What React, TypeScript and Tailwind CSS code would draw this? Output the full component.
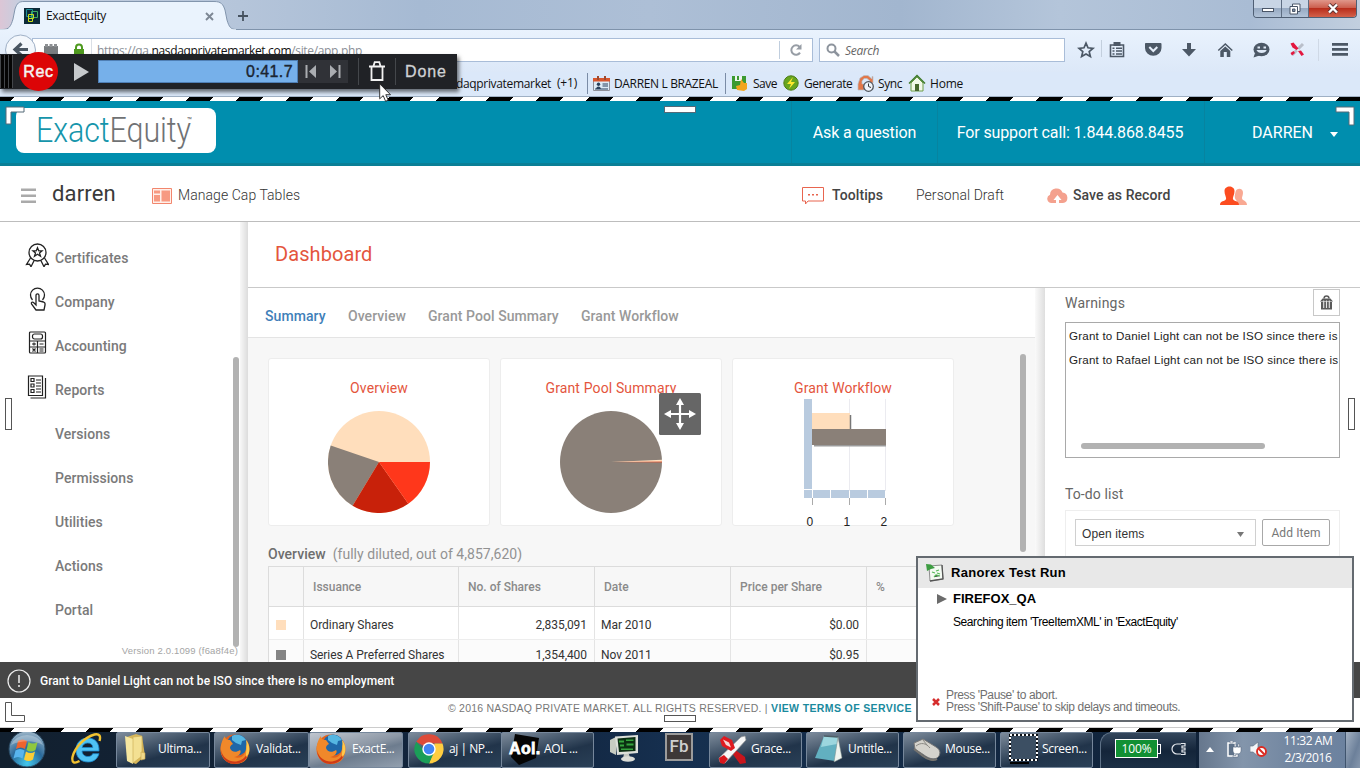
import React from "react";

const SEGOE = "font-['Open_Sans','Noto_Sans',sans-serif]";
const ROBOTO = "font-[Roboto,sans-serif]";
const ARIAL = "font-['Liberation_Sans',Arial,sans-serif]";

function Stripes() {
  return (
    <div className="h-[4px] shrink-0 bg-[repeating-linear-gradient(135deg,#000_0px,#000_9.9px,#fff_9.9px,#fff_27.6px,#000_27.6px,#000_35.355px)]" />
  );
}

/* ---------- Browser chrome ---------- */

function TitleBar() {
  return (
    <div className="relative flex h-[30px] shrink-0 items-start border-b border-[#7f93ab] bg-[linear-gradient(90deg,#dcc6d6_0px,#c5cfe0_20px,#b5c5da_240px,#a6bad3_420px,#adbfd6_650px,#a2b6cf_900px,#b4c5da_1060px,#a9bcd4_1250px,#c2cfdf_1360px)]">
      <svg width="236" height="30" viewBox="0 0 236 30" className="absolute left-0 top-0">
        <path d="M0 29.500H3C9 29.500 11 26 13 19L15 9C17 3 19 1.500 24 1.500H214C221 1.500 223 4 225 10L227 20C229 27 231 29.500 236 29.500V31H0Z" fill="#eaf3fd" stroke="#8295ad" />
        <path d="M0 30H236" stroke="#eaf3fd" strokeWidth="1.400" />
      </svg>
      <div className="relative flex h-[32px] w-[236px] items-center pl-[24px]">
        <svg width="16" height="16" viewBox="0 0 16 16">
          <rect width="16" height="16" fill="#0c2a38" />
          <path d="M2.500 1.500h6v7h-6z" fill="none" stroke="#1e8f9a" />
          <path d="M7.500 3.500h6v6h-6z" fill="none" stroke="#3fae62" />
          <path d="M4.500 6.500h5v4h-5zM4.500 10.500h4v3h-4z" fill="none" stroke="#c9e01a" />
        </svg>
        <span className={`${SEGOE} ml-[6px] w-[150px] text-[12px] tracking-[-0.4px] text-[#111]`}>ExactEquity</span>
        <svg width="9" height="9" viewBox="0 0 9 9" className="ml-[9px]">
          <path d="M1 1l7 7M8 1l-7 7" stroke="#7d8794" strokeWidth="1.900" />
        </svg>
      </div>
      <svg width="12" height="12" viewBox="0 0 12 12" className="ml-[1px] mt-[10px]">
        <path d="M6 1v10M1 6h10" stroke="#46525f" strokeWidth="1.800" />
      </svg>
      <div className="ml-auto mr-[3px] flex h-[18px] overflow-hidden rounded-b-[4px] border border-t-0 border-[#4f5f74]">
        <div className="flex w-[28px] items-center justify-center border-r border-[#5d6d82] bg-[linear-gradient(#c8d5e5_45%,#97aac2_50%,#b2c3d8)] pt-[3px]">
          <div className="h-[4px] w-[12px] border border-[#4a5668] bg-white" />
        </div>
        <div className="flex w-[27px] items-center justify-center border-r border-[#5d6d82] bg-[linear-gradient(#c8d5e5_45%,#97aac2_50%,#b2c3d8)]">
          <svg width="12" height="12" viewBox="0 0 12 12">
            <path d="M3.500 1h7.500v7.500H3.500z" fill="#fff" stroke="#4a5668" />
            <path d="M1 3.500h7.500V11H1z" fill="#fff" stroke="#4a5668" />
            <path d="M3.500 6h2.500v2.500H3.500z" fill="#7d90a8" stroke="#4a5668" />
          </svg>
        </div>
        <div className="flex w-[47px] items-center justify-center bg-[linear-gradient(#e0978a_0%,#cc5f4e_45%,#b92e1c_50%,#d3614a)]">
          <svg width="12" height="11" viewBox="0 0 12 11">
            <path d="M2 1.500l8 8M10 1.500l-8 8" stroke="#5d3434" strokeWidth="4" />
            <path d="M2 1.500l8 8M10 1.500l-8 8" stroke="#fff" strokeWidth="2.400" />
          </svg>
        </div>
      </div>
    </div>
  );
}

function NavBar() {
  return (
    <div className="relative flex h-[42px] shrink-0 items-start bg-[linear-gradient(#e9f2fd,#dce8f8)] pt-[8px]">
      <div className={`${SEGOE} ml-[32px] flex h-[24px] w-[781px] items-center border border-[#a9bdd8] bg-white text-[12px]`}>
        <svg width="16" height="14" viewBox="0 0 16 14" className="ml-[11px]">
          <path d="M0 3h14v11H0z" fill="#7a7d80" />
          <path d="M1 1h3v3H1zM5.500 1h3v3h-3zM10 1h3v3h-3z" fill="#8d9093" />
        </svg>
        <svg width="12" height="14" viewBox="0 0 12 14" className="ml-[13px]">
          <path d="M3 7V4.500a3 3 0 0 1 6 0V7" fill="none" stroke="#4f9a20" strokeWidth="2" />
          <path d="M1 6h10v8H1z" fill="#4f9a20" />
        </svg>
        <div className="ml-[6px] h-[22px] w-px bg-[#dadfe6]" />
        <span className="ml-[5px] mt-[2px] w-[680px] tracking-[-0.33px] text-[#8b9097]">https://qa.<span className="text-[#111]">nasdaqprivatemarket.com</span>/site/app.php</span>
        <div className="ml-auto h-[18px] w-px bg-[#c0cede]" />
        <div className="flex w-[32px] justify-center">
          <svg width="14" height="14" viewBox="0 0 14 14">
            <path d="M11 9.600A4.700 4.700 0 1 1 10.600 4" fill="none" stroke="#979da5" strokeWidth="2" />
            <path d="M12.500 1v5.500H7z" fill="#979da5" />
          </svg>
        </div>
      </div>
      <svg width="64" height="34" viewBox="0 0 64 34" className="absolute left-0 top-[3px]">
        <circle cx="20.500" cy="17" r="15" fill="#f3f7fc" stroke="#9fb0c6" />
        <path d="M28 16.500H16M21.500 10.500l-6.500 6 6.500 6" fill="none" stroke="#4a5662" strokeWidth="3.200" />
      </svg>
      <div className="ml-[6px] flex h-[24px] w-[246px] items-center border border-[#a9bdd8] bg-white pl-[6px]">
        <svg width="14" height="14" viewBox="0 0 14 14">
          <circle cx="5.500" cy="5.500" r="4" fill="none" stroke="#8d949d" strokeWidth="2" />
          <path d="M8.500 8.500L13 13" stroke="#8d949d" strokeWidth="2.500" />
        </svg>
        <span className={`${SEGOE} ml-[5px] mt-[2px] text-[12px] italic tracking-[-0.3px] text-[#666]`}>Search</span>
      </div>
      <div className="ml-[12px] flex h-[24px] items-center">
        <svg width="283" height="24" viewBox="0 0 283 24" fill="#4c5866">
          <path d="M9 5.200l2 4.600 5 .5-3.800 3.300 1.200 4.900L9 15.900l-4.400 2.600 1.200-4.900L2 10.300l5-.5z" fill="none" stroke="#4c5866" strokeWidth="1.700" />
          <path d="M24.500 2v17" stroke="#c3cfdd" />
          <path d="M33.500 7h13v11.500H33.500z" fill="none" stroke="#4c5866" strokeWidth="1.600" />
          <path d="M36.500 4h7v4h-7zM35.500 9.500h2v1.500h-2zM39 9.500h6V11h-6zM35.500 12.300h2v1.500h-2zM39 12.300h6v1.500h-6zM35.500 15.200h2v1.500h-2zM39 15.200h6v1.500h-6z" />
          <path d="M68.500 5H83.500a1 1 0 0 1 1 1v4a8 7.500 0 0 1-16.500 0V6a1 1 0 0 1 .5-1z" />
          <path d="M72.300 9l4 4 4-4" fill="none" stroke="#e5eefa" strokeWidth="2" />
          <path d="M110 5h4v6h5l-7 7.500L105 11h5z" />
          <path d="M148.300 5l7.500 7-1 1-6.500-6-6.500 6-1-1z" />
          <path d="M148.300 8.500l5 4.500v6h-3.500v-5h-3v5h-3.500v-6z" />
          <ellipse cx="184.500" cy="11.500" rx="8" ry="6.700" />
          <path d="M178 15l-1.500 4.500 6-2z" />
          <path d="M180.500 8.500h2.500v2h-2.500zM186.500 8.500h2.500v2h-2.500zM179.500 12h10.200c-1 4-9 4-10.200 0z" fill="#dfe9f6" />
          <path d="M226 6l-11 11" stroke="#b9bfca" strokeWidth="3" />
          <path d="M215 6l11 11" stroke="#e8eef6" strokeWidth="2" />
          <path d="M213.500 5.500l3-1 5 6-2 1.500-4-2.500zM221 13l3-.5 3 4-2.500 1.500zM213.500 15l3-2 1.500 2-3 2.500z" fill="#e3173f" />
          <path d="M241.500 1v22" stroke="#cfd9e6" />
          <path d="M255 5h16v2.800h-16zM255 10h16v2.800h-16zM255 15h16v2.800h-16z" />
        </svg>
      </div>
    </div>
  );
}

function Bookmarks() {
  return (
    <div className={`${SEGOE} flex h-[25px] shrink-0 items-center border-b border-[#9fb0c4] bg-[#dbe8f9] text-[12px] text-[#111]`}>
      <div className="w-[551px] text-right tracking-[-0.33px]">nasdaqprivatemarket</div>
      <span className="-mt-[3px] ml-[6px] w-[30px] tracking-[-0.2px]">(+1)</span>
      <div className="-mt-[2px] h-[21px] w-px bg-[#7b8ca6]" />
      <svg width="17" height="15" viewBox="0 0 17 15" className="-mt-[2px] ml-[5px]">
        <path d="M.5 2.500h16v12H.5z" fill="#dcebf6" stroke="#8d8f99" />
        <path d="M0 2h17v3.500H0z" fill="#d8552c" />
        <path d="M4 0h2v4H4zM11 0h2v4h-2z" fill="#9b4a30" />
        <circle cx="5.500" cy="8.300" r="1.700" fill="#29405c" />
        <path d="M3 13.500c0-4 5-4 5 0zM9.500 7.500H15v1H9.500zM9.500 9.500H15v1H9.500zM2 12.500h13v1H2z" fill="#29405c" />
      </svg>
      <span className="ml-[4px] w-[113px] whitespace-nowrap text-[12px] tracking-[-0.35px]">DARREN L BRAZEAL</span>
      <div className="-ml-[2px] -mt-[2px] h-[21px] w-px bg-[#7b8ca6]" />
      <svg width="16" height="16" viewBox="0 0 16 16" className="-mt-[2px] ml-[6px]">
        <path d="M0 1h14v13H0z" fill="#3c9a31" />
        <path d="M3 1h7v5H3z" fill="#eef6ee" />
        <path d="M5 1h2v4H5z" fill="#3c9a31" />
        <path d="M9 4l3 4h3v6l-3 2-7-1-1-4 4-1z" fill="#f3a51d" />
      </svg>
      <span className="ml-[5px] w-[25px] tracking-[-0.5px]">Save</span>
      <svg width="16" height="16" viewBox="0 0 16 16" className="-mt-[2px] ml-[5px]">
        <circle cx="8" cy="8" r="7.200" fill="#67a51f" stroke="#4c7d16" />
        <path d="M10 2L4 9h4l-2 5 6-7H8z" fill="#ffe92e" />
      </svg>
      <span className="ml-[5px] w-[48px] tracking-[-0.5px]">Generate</span>
      <svg width="18" height="17" viewBox="0 0 18 17" className="-mt-[2px] ml-[5px]">
        <path d="M1 15V9l2-6 4-2.500h4L15 4V1.500h1V8h-5l2-2-3-2.500H7L5 6v3h2v6z" fill="#e27749" stroke="#b9bec5" strokeWidth=".7" />
        <circle cx="11.500" cy="11.500" r="4.800" fill="#eef3fa" stroke="#50555d" strokeWidth="1.300" />
        <path d="M11.500 8.500v3l2.500 1" fill="none" stroke="#333" />
      </svg>
      <span className="ml-[3px] w-[26px] tracking-[-0.4px]">Sync</span>
      <svg width="18" height="18" viewBox="0 0 18 18" className="-mt-[2px] ml-[4px]">
        <path d="M3 9v8h12V9L9 3z" fill="#f1f8e9" stroke="#6d9d48" />
        <path d="M1 9.500L9 1.500l8 8" fill="none" stroke="#3d7a28" strokeWidth="1.500" />
        <path d="M7 10h4v7H7z" fill="#47672e" />
      </svg>
      <span className="ml-[4px] tracking-[-0.2px]">Home</span>
    </div>
  );
}

/* ---------- Application ---------- */

function AppHeader() {
  return (
    <div className={`${ROBOTO} flex h-[65px] shrink-0 items-stretch border-b-[3px] border-[#097f96] bg-[#008eae] text-[16px] tracking-[-0.13px] text-white`}>
      <div className="ml-[16px] mt-[7px] flex h-[45px] w-[200px] items-center rounded-[8px] bg-white pl-[20px]">
        <span className="w-[151px] whitespace-nowrap text-[35px] font-light leading-[44px] tracking-[-0.1px] text-[#707274]">
          <span className="inline-block origin-left scale-x-[0.87]"><span className="text-[#1595ab]">Exact</span>Equity</span>
        </span>
        <span className="-mt-[20px] text-[8px] leading-[10px] text-[#555]">™</span>
      </div>
      <div className="ml-auto flex w-[146px] items-center justify-center border-l border-[#0784a0] pt-[1px]">Ask a question</div>
      <div className="flex w-[267px] items-center justify-center border-l border-[#0784a0] pr-[2px] pt-[1px]">For support call: 1.844.868.8455</div>
      <div className="flex w-[156px] items-center border-l border-[#0784a0] pl-[47px] pt-[2px]">
        <span className="w-[78px] tracking-normal">DARREN</span>
        <svg width="8" height="5" viewBox="0 0 8 5" className="mt-[3px]"><path d="M0 0h8L4 5z" fill="#fff" /></svg>
      </div>
    </div>
  );
}

function SubHeader() {
  return (
    <div className={`${ROBOTO} flex h-[56px] shrink-0 items-center border-b border-[#bdbdbd] bg-white pt-[4px] text-[14px] text-[#444]`}>
      <svg width="15" height="16" viewBox="0 0 15 16" className="ml-[21px]">
        <path d="M0 .5h15V3H0zM0 6.500h15V9H0zM0 12.500h15V15H0z" fill="#aaa" />
      </svg>
      <span className="-mt-[5px] ml-[16px] w-[100px] text-[22px] tracking-[0.15px] text-[#3a3a3a]">darren</span>
      <svg width="20" height="16" viewBox="0 0 20 16">
        <path d="M.5.500h19v15H.5z" fill="#fff0ea" stroke="#f2866d" />
        <path d="M2 2.500h6v3H2zM2 7h6v6.500H2zM9.500 2.500h8.500v11H9.500z" fill="#f79a82" />
      </svg>
      <span className="-mt-[1px] ml-[6px] w-[624px] font-light tracking-[0.06px] text-[#333]">Manage Cap Tables</span>
      <svg width="22" height="18" viewBox="0 0 22 18">
        <path d="M.5.500h21v13.500H6l-2.500 3V14h-3z" fill="none" stroke="#e8654f" />
        <path d="M6 7h2v1.500H6zM10 7h2v1.500h-2zM14 7h2v1.500h-2z" fill="#e8654f" />
      </svg>
      <span className="ml-[8px] w-[84px] font-medium tracking-[0.1px]">Tooltips</span>
      <span className="w-[131px] font-light tracking-[0.05px] text-[#333]">Personal Draft</span>
      <svg width="21" height="15" viewBox="0 0 21 15">
        <path d="M4.500 15A4.300 4.300 0 0 1 3 6.700 6.500 6.500 0 0 1 15.500 4.500 5.300 5.300 0 0 1 16 15h-4v-3h2.500L10.500 7l-4 5H9v3z" fill="#f4a18e" />
      </svg>
      <span className="ml-[5px] w-[147px] font-medium tracking-[0.08px]">Save as Record</span>
      <svg width="28" height="20" viewBox="0 0 28 20">
        <path d="M14 19c5-1 3-4 2-5-2-3-1-5-.5-8 1-5 8-4 7.500 1-.3 3-1 4-1 5 0 3 5 2 5 7z" fill="#f9a993" />
        <path d="M0 19c0-5 5-3 6-6 .5-2-1.500-4-1.500-8 0-6 10-6 10 0 0 4-2 6-1.500 8 1 3 6 1 6 6z" fill="#fc4c20" />
      </svg>
    </div>
  );
}

const navIcons: Record<string, React.ReactNode> = {
  Certificates: (
    <g fill="none" stroke="#222" strokeWidth="1.300">
      <circle cx="12.500" cy="9.500" r="8.500" />
      <path d="M12.500 4.800l1.300 3.100h3.200l-2.500 2.100 1 3.200-3-1.900-3 1.900 1-3.200-2.500-2.100h3.200z" />
      <path d="M5.500 15L1.500 21.500l3-.3 1.500 2.500 3-6M19.500 15l4 6.500-3-.3-1.500 2.500-3-6" />
    </g>
  ),
  Company: (
    <g fill="none" stroke="#222" strokeWidth="1.300">
      <path d="M7.500 13a7 7 0 1 1 10 0" />
      <path d="M11 15V8.500c0-2.300 3-2.300 3 0V14l4.500 1c1.500.5 1.800 1.500 1.500 3l-1 5h-8L6.500 17c-.7-1.500 1-2.500 2-1.500l2.500 2.500z" />
    </g>
  ),
  Accounting: (
    <g fill="none" stroke="#222" strokeWidth="1.200">
      <rect x="4.500" y="1" width="16" height="21" rx="1" />
      <rect x="7.500" y="3" width="10" height="5" rx="2" />
      <path d="M4.500 10h16M4.500 16h16M12.500 10v12M7 13h4M9 11.500v3M14.500 13h4M7.500 17.500l3 3M10.500 17.500l-3 3M14.500 18h4M14.500 20h4" />
    </g>
  ),
  Reports: (
    <g fill="none" stroke="#222" strokeWidth="1.200">
      <path d="M3.500 1h14v19.500h-14zM20.500 3v20H5.500" />
      <path d="M6 3.500h3v3H6zM6 9h3v3H6zM6 14.500h3v3H6zM11 5h5M11 8h5M11 11h5M11 14h5M11 17h5" />
    </g>
  ),
};

const navItems = ["Certificates", "Company", "Accounting", "Reports", "Versions", "Permissions", "Utilities", "Actions", "Portal"];

function Sidebar() {
  return (
    <div className="flex w-[248px] shrink-0 bg-white">
      <div className="flex w-[233px] flex-col pt-[14px]">
        {navItems.map((n) => (
          <div key={n} className={`${ROBOTO} flex h-[44px] shrink-0 items-center pl-[25px] text-[14px] font-medium tracking-[0.04px] text-[#7a7a7a]`}>
            <svg width="24" height="24" viewBox="0 0 24 24" className="-mt-[6px]">{navIcons[n]}</svg>
            <span className="ml-[6px]">{n}</span>
          </div>
        ))}
        <div className={`${ARIAL} mt-[12px] self-end whitespace-nowrap text-[9.500px] leading-[14px] tracking-[0.16px] text-[#a5a5a5]`}>
          <span className="-mr-[5px]">Version 2.0.1099 (f6a8f4e)</span>
        </div>
      </div>
      <div className="mt-[135px] h-[290px] w-[6px] rounded-full bg-[#b2b2b2]" />
      <div className="ml-auto w-[8px] bg-[linear-gradient(90deg,#f8f8f8,#dcdcdc)]" />
    </div>
  );
}

function Card({ title, children }: { title: string; children: React.ReactNode }) {
  return (
    <div className="flex h-[168px] w-[222px] flex-col items-center rounded-[3px] border border-[#ededed] bg-white">
      <div className={`${ROBOTO} mt-[19px] h-[20px] shrink-0 text-[14px] leading-[20px] tracking-[0.13px] text-[#e4553d]`}>{title}</div>
      {children}
    </div>
  );
}

function OverviewPie() {
  return (
    <svg width="102" height="102" viewBox="0 0 102 102" className="mt-[13px] shrink-0">
      <circle cx="51" cy="51" r="51" fill="#ffdebc" />
      <path d="M51 51L2.700 34.600A51 51 0 0 0 24.600 94.700z" fill="#8a8078" />
      <path d="M51 51L24.600 94.700A51 51 0 0 0 80.300 92.700z" fill="#c8210a" />
      <path d="M51 51L80.300 92.700A51 51 0 0 0 102 51z" fill="#ff371b" />
    </svg>
  );
}

function PoolPie() {
  return (
    <svg width="102" height="102" viewBox="0 0 102 102" className="mt-[13px] shrink-0">
      <circle cx="51" cy="51" r="51" fill="#8a8078" />
      <path d="M51 51L102 48.700V51z" fill="#ffdebc" />
      <path d="M51 51L102 50.400V51.600z" fill="#d85a3e" />
    </svg>
  );
}

function WorkflowChart() {
  return (
    <svg width="92" height="132" viewBox="0 0 92 132" className="mt-px shrink-0 overflow-visible" fontFamily="Liberation Sans, Arial, sans-serif" fontSize="12">
      <path d="M52.500 0V92M88.500 0V92" stroke="#ebebf0" />
      <path d="M7 0h8v90H7z" fill="#b9cbdf" />
      <path d="M15 14h38v17H15z" fill="#ffdebc" />
      <path d="M17 45h72v2.500H17z" fill="#9b9b9b" />
      <path d="M15 30h74v16H15z" fill="#8a8078" />
      <path d="M53.500 16v14" stroke="#777" strokeWidth="1.500" />
      <path d="M7 91h8v8H7zM16 91h17v8H16zM34 91h18v8H34zM53 91h17v8H53zM71 91h17v8H71z" fill="#b9cbdf" />
      <path d="M15.500 99v7M52.500 99v7M88.500 99v7" stroke="#aaa" />
      <text x="9.500" y="127" fill="#222">0</text>
      <text x="46.500" y="127" fill="#222">1</text>
      <text x="83.500" y="127" fill="#222">2</text>
    </svg>
  );
}

const rows = [
  { color: "bg-[#ffdebc]", name: "Ordinary Shares", shares: "2,835,091", date: "Mar 2010", price: "$0.00" },
  { color: "bg-[#848484]", name: "Series A Preferred Shares", shares: "1,354,400", date: "Nov 2011", price: "$0.95" },
];

function ShareTable() {
  return (
    <div className={`${ROBOTO} ml-[20px] w-[752px] border-l border-t border-[#dcdcdc] text-[12px]`}>
      <div className="flex h-[40px] items-stretch border-b border-[#dcdcdc] font-medium text-[#8a8a8a] [&>div]:flex [&>div]:items-center [&>div]:border-r [&>div]:border-[#dcdcdc] [&>div]:pl-[9px]">
        <div className="w-[35px]" />
        <div className="w-[155px]">Issuance</div>
        <div className="w-[136px]">No. of Shares</div>
        <div className="w-[136px]">Date</div>
        <div className="w-[136px]">Price per Share</div>
        <div className="w-[153px]">%</div>
      </div>
      {rows.map((r, i) => (
        <div key={r.name} className={`flex items-stretch border-b border-[#ededed] tracking-[-0.06px] text-[#333] [&>div]:flex [&>div]:items-center [&>div]:border-r [&>div]:border-[#e4e4e4] ${i === 0 ? "h-[33px] bg-white [&>div]:pt-[3px]" : "h-[30px] bg-[#fbfbfb]"}`}>
          <div className="w-[35px] pl-[7px]"><div className={`h-[10px] w-[10px] ${r.color}`} /></div>
          <div className="w-[155px] pl-[6px]">{r.name}</div>
          <div className="w-[136px] justify-end pr-[7px]">{r.shares}</div>
          <div className="w-[136px] pl-[6px]">{r.date}</div>
          <div className="w-[136px] justify-end pr-[7px]">{r.price}</div>
          <div className="w-[153px]" />
        </div>
      ))}
    </div>
  );
}

function Center() {
  return (
    <div className="flex w-[797px] shrink-0">
      <div className="flex w-[787px] flex-col bg-[#f7f7f7]">
        <div className={`${ROBOTO} flex h-[50px] shrink-0 items-center border-b border-[#e4e4e4] bg-white pl-[17px] pt-[8px] text-[14px] font-medium tracking-[0.06px] text-[#999]`}>
          <span className="w-[83px] text-[#3f7fb9]">Summary</span>
          <span className="w-[80px]">Overview</span>
          <span className="w-[153px]">Grant Pool Summary</span>
          <span>Grant Workflow</span>
        </div>
        <div className="flex shrink-0">
          <div className="flex w-[706px] gap-[10px] pl-[20px] pt-[20px]">
            <Card title="Overview"><OverviewPie /></Card>
            <Card title="Grant Pool Summary"><PoolPie /></Card>
            <Card title="Grant Workflow"><WorkflowChart /></Card>
          </div>
          <div className="-mb-[26px] ml-[66px] mt-[16px] h-[198px] w-[6px] rounded-full bg-[#b2b2b2]" />
        </div>
        <div className={`${ROBOTO} ml-[20px] mt-[18px] h-[22px] shrink-0 text-[14px] leading-[20px] tracking-[0.03px] text-[#929292]`}>
          <span className="font-medium text-[#6e6e6e]">Overview</span><span className="ml-[7px]">(fully diluted, out of 4,857,620)</span>
        </div>
        <ShareTable />
      </div>
      <div className="w-[10px] bg-[linear-gradient(90deg,#fafafa,#dedede)]" />
    </div>
  );
}

function RightPanel() {
  return (
    <div className="w-[315px] bg-white pl-[20px] text-[#666]">
      <div className="flex h-[34px] items-start justify-between">
        <span className={`${ROBOTO} mt-[5px] text-[14px] leading-[20px] tracking-[0.2px]`}>Warnings</span>
        <div className="mr-[20px] mt-[1px] flex h-[27px] w-[27px] items-center justify-center border border-[#c8c8c8]">
          <svg width="13" height="15" viewBox="0 0 13 15">
            <path d="M4 3.500c0-3.500 5-3.500 5 0" fill="none" stroke="#5a5a5a" strokeWidth="1.500" />
            <path d="M0 6.500L2.500 3.500h8L13 6.500zM1 7h11v7.500H1z" fill="#5a5a5a" />
            <path d="M3.700 5.500V13M6.500 5.500V13M9.300 5.500V13" stroke="#e5e5e5" strokeWidth="1.100" />
          </svg>
        </div>
      </div>
      <div className={`${ARIAL} flex h-[136px] w-[275px] flex-col overflow-hidden border border-[#a9a9a9] pl-[3px] pt-[1px] text-[11.600px] leading-[24px] tracking-[0.2px] text-[#222]`}>
        <div className="h-[24px] whitespace-nowrap">Grant to Daniel Light can not be ISO since there is</div>
        <div className="h-[24px] whitespace-nowrap">Grant to Rafael Light can not be ISO since there is</div>
        <div className="ml-[12px] mt-[71px] h-[6px] w-[184px] rounded-full bg-[#b2b2b2]" />
      </div>
      <div className={`${ROBOTO} mt-[26px] text-[14px] leading-[20px] tracking-[0.1px]`}>To-do list</div>
      <div className="mt-[6px] flex h-[200px] w-[275px] items-start gap-[6px] border border-[#eee] pl-[9px] pt-[8px]">
        <div className={`${ARIAL} flex h-[27px] w-[181px] items-center justify-between border border-[#d0d0d0] pl-[6px] pr-[11px] text-[12px] tracking-[0.1px] text-[#333]`}>
          <span className="mt-[2px]">Open items</span>
          <svg width="7" height="5" viewBox="0 0 7 5" className="mt-[3px]"><path d="M0 0h7L3.500 5z" fill="#777" /></svg>
        </div>
        <div className={`${ROBOTO} flex h-[27px] w-[68px] items-center justify-center rounded-[2px] border border-[#a8a8a8] text-[12px] tracking-[0.1px] text-[#777]`}>Add Item</div>
      </div>
    </div>
  );
}

function Bottom() {
  return (
    <>
      <div className={`${ROBOTO} flex h-[36px] shrink-0 items-center bg-[#464646] pl-[7px] pt-[1px] text-[12px] font-medium tracking-[0.05px] text-white`}>
        <svg width="24" height="24" viewBox="0 0 24 24">
          <circle cx="12" cy="12" r="11" fill="none" stroke="#eee" strokeWidth="1.200" />
          <path d="M12 6v8M12 16v2" stroke="#eee" strokeWidth="1.500" />
        </svg>
        <span className="ml-[9px]">Grant to Daniel Light can not be ISO since there is no employment</span>
      </div>
      <div className={`${ARIAL} flex h-[30px] shrink-0 items-start border-b border-[#ccc] bg-white pl-[448px] pt-[3px] text-[10.500px] leading-[14px] text-[#777]`}>
        <span className="w-[323px] whitespace-nowrap tracking-[0.22px]">© 2016 NASDAQ PRIVATE MARKET. ALL RIGHTS RESERVED. |</span>
        <span className="whitespace-nowrap font-bold tracking-[0.38px] text-[#1a8a9e]">VIEW TERMS OF SERVICE</span>
      </div>
    </>
  );
}

/* ---------- Taskbar ---------- */

function Firefox() {
  return (
    <svg width="32" height="32" viewBox="0 0 32 32" className="shrink-0">
      <circle cx="16" cy="16" r="14.500" fill="#e4621b" />
      <circle cx="18" cy="12" r="10.500" fill="#1f67a8" />
      <path d="M13 3c4-2.500 11-1 14 4l-4 1-1 4-5-2-4-3z" fill="#55b6e2" />
      <path d="M2 12C3 7 5 4 6 3c0 3 2 4 5 4l3 4c-2 1-3 2-3 4 1 4 6 5 10 2 2 2-1 7-6 7 8 3 13-3 12-13 6 11 0 20-11 20C6 31 0 23 2 12z" fill="#f0882a" />
      <path d="M2 17c2 9 10 13 17 11 5-1 9-5 10-10 1 7-5 13-14 13C8 31 2 25 2 17z" fill="#cf3b16" />
      <path d="M27 7c4.500 5 4.500 13 .5 17-1.500-3 1-8-.5-17z" fill="#ffc94b" />
    </svg>
  );
}

function FolderIcon() {
  return (
    <svg width="30" height="32" viewBox="0 0 30 32" className="shrink-0">
      <path d="M5 4l9-3 6 2 3 20-9 8-6-2z" fill="#d7b75a" />
      <path d="M3 3l8 3v25l-6-3z" fill="#f6e7a0" />
      <path d="M11 4l9-1v20l-9 7z" fill="#f3e092" stroke="#c9a94f" strokeWidth=".6" />
      <path d="M19 19l4 1v6l-4 1z" fill="#f0d98a" stroke="#c9a94f" strokeWidth=".6" />
    </svg>
  );
}

function ChromeIcon() {
  return (
    <svg width="30" height="30" viewBox="0 0 30 30" className="shrink-0">
      <path d="M15 15L2.300 7.700A14.500 14.500 0 0 1 28.500 9.500H15z" fill="#dd4b39" />
      <path d="M28.500 9.500A14.500 14.500 0 0 1 15 29.500L19.500 17l1-7.500z" fill="#ffcd40" />
      <path d="M2.300 7.700A14.500 14.500 0 0 0 15 29.500L20 18.500h-8z" fill="#1b9e58" />
      <circle cx="15" cy="15" r="6.700" fill="#fff" />
      <circle cx="15" cy="15" r="5.300" fill="#4285f4" />
    </svg>
  );
}

function AolIcon() {
  return (
    <svg width="32" height="32" viewBox="0 0 32 32" className="shrink-0 overflow-visible">
      <path d="M6 1l24 4-3 20-17 7-8-8z" fill="#050505" />
      <text x="0" y="21" fontFamily="Liberation Sans, sans-serif" fontWeight="700" fontSize="16" fill="#fff" stroke="#fff" strokeWidth=".8" textLength="31">Aol.</text>
    </svg>
  );
}

function SnipIcon() {
  return (
    <svg width="33" height="33" viewBox="0 0 33 33" className="shrink-0">
      <path d="M10 12l7 4 11 8 1 6-6 1-8-11z" fill="#c9151c" />
      <path d="M3 29l-1-4L24 4l4-1 1 4L8 30z" fill="#f7f7f7" stroke="#999" strokeWidth=".7" />
      <path d="M3 7l4-4 8 4 3 8-4 3-9-5z" fill="#df1a20" />
      <path d="M6 6.500l6 3 2 5-5-2.500z" fill="#f6d6d6" />
      <path d="M2 25l5-3 4 4-4 5-4-1z" fill="#d8161c" />
    </svg>
  );
}

function NotepadIcon() {
  return (
    <svg width="32" height="32" viewBox="0 0 32 32" className="shrink-0">
      <path d="M10 3l14 1-3 24L1 25z" fill="#62b0c0" />
      <path d="M10 3l14 1-1 7-16 3z" fill="#9cd6de" />
      <path d="M10 3l14 1" stroke="#4d5e66" strokeWidth="1.500" />
      <path d="M24 4l4 21-8 4z" fill="#eff4ef" stroke="#7a8a86" strokeWidth=".5" />
    </svg>
  );
}

function MouseIcon() {
  return (
    <svg width="34" height="30" viewBox="0 0 34 30" className="shrink-0">
      <path d="M4 9l9-4 13 8c5 3 5 8 1 11-4 2-9 0-13-3L5 15z" fill="#d5d3cd" stroke="#777" />
      <path d="M6 12c5-4 10-3 14 2M13 6l4 5" fill="none" stroke="#8b8984" />
      <path d="M4 15l9 7c5 4 11 5 14 3" fill="none" stroke="#75736f" strokeWidth="2" />
    </svg>
  );
}

function MarqueeIcon() {
  return (
    <svg width="31" height="34" viewBox="0 0 31 34" className="shrink-0">
      <path d="M2 3h27v25H2z" fill="#3c4f63" stroke="#0b0f14" strokeWidth="2" />
      <path d="M2 3h27v25H2z" fill="none" stroke="#fff" strokeWidth="2" strokeDasharray="2 2" />
      <path d="M2 30h19v2H2z" fill="#000" />
    </svg>
  );
}

const taskBtn =
  "flex h-[36px] shrink-0 items-center overflow-hidden whitespace-nowrap rounded-[2px] border border-[#76879b] pb-[2px] text-[12px] tracking-[-0.3px] text-white";
const dark = "bg-[linear-gradient(165deg,#7d8b9b_0%,#46586c_35%,#21344a_60%,#2a4057_100%)]";
const lit = "bg-[linear-gradient(165deg,#c0c6cf_0%,#8d98a6_45%,#6d7c8e_60%,#93a0af_100%)]";

function Taskbar() {
  return (
    <div className={`${SEGOE} flex h-[37px] shrink-0 items-start bg-[linear-gradient(90deg,#12202f,#122640_40%,#163050_50%,#102238_90%)]`}>
      <div className="flex w-[116px] items-center">
        <svg width="38" height="36" viewBox="0 0 38 36" className="ml-[8px]">
          <defs>
            <radialGradient id="orb" cx=".5" cy=".9" r=".9">
              <stop offset="0" stopColor="#43c9ee" />
              <stop offset=".5" stopColor="#2a6a9b" />
              <stop offset="1" stopColor="#9fb7c9" />
            </radialGradient>
          </defs>
          <circle cx="19" cy="17" r="18" fill="url(#orb)" stroke="#27465f" />
          <path d="M10 9c3-2 6-2 9 0l-2 8c-3-2-6-2-9 0z" fill="#f0642d" />
          <path d="M20.500 10c3 2 6 2 9 0l-2 8c-3 2-6 2-9 0z" fill="#8fc840" />
          <path d="M7.500 18.500c3-2 6-2 9 0l-2 8c-3-2-6-2-9 0z" fill="#58b5ee" />
          <path d="M18 19.500c3 2 6 2 9 0l-2 8c-3 2-6 2-9 0z" fill="#fbcd36" />
          <path d="M3 13a17 15 0 0 1 32 0c-9-5-22-5-32 0z" fill="#fff" opacity=".28" />
        </svg>
        <svg width="32" height="34" viewBox="0 0 32 34" className="ml-[25px]">
          <path d="M28 18H11c.5 4 3 5.500 6 5.500 2.500 0 4-1 4.700-2.800H28C26.700 25.500 23 29 17 29 10 29 5 24.500 5 17S10 5 17 5c7 0 11.500 5 11 13zM21.800 14.500c-.3-3-2-4.500-5-4.500s-5 1.500-5.700 4.500z" fill="#4fc3f4" stroke="#1a86cb" strokeWidth=".8" />
          <path d="M28.500 8c1.500-5 0-7.500-5-6.500C14 4 4 14 1.500 24c-1 6 2 7 7 4" fill="none" stroke="#f2c230" strokeWidth="2.400" />
        </svg>
      </div>
      <div className={`${taskBtn} ${dark} w-[94px] pl-[5px]`}><FolderIcon /><span className="ml-[6px]">Ultima...</span></div>
      <div className={`${taskBtn} ${dark} ml-[4px] w-[95px] pl-[4px]`}><Firefox /><span className="ml-[5px]">Validat...</span></div>
      <div className={`${taskBtn} ${lit} w-[94px] pl-[5px]`}><Firefox /><span className="ml-[5px] tracking-[-0.4px]">ExactE...</span></div>
      <div className={`${taskBtn} ${dark} ml-[5px] w-[94px] pl-[5px]`}><ChromeIcon /><span className="ml-[5px] tracking-[-0.45px]">aj | NP...</span></div>
      <div className={`${taskBtn} ${dark} -ml-px w-[93px] pl-[7px]`}><AolIcon /><span className="ml-[3px]">AOL ...</span></div>
      <svg width="34" height="34" viewBox="0 0 34 34" className="ml-[14px]">
        <path d="M2 8l6-3v18l-6-3z" fill="#c7ccc2" />
        <path d="M7 4.500l23-1.500v18L9 23z" fill="#dcdfd9" />
        <path d="M9.500 6.500l18-1.500v14l-16.500 1z" fill="#0b2f12" />
        <path d="M11 8.500h5v2h-5zM18 7.500h7.500V9H18zM12 12.500h4v2h-4zM18.500 11.500h7v2h-7zM13 16.500h12V18H13z" fill="#35a33d" />
        <path d="M16 22h5l1 4h-7z" fill="#c3c7c0" />
        <ellipse cx="20" cy="27" rx="7" ry="2.800" fill="#dadcd6" />
      </svg>
      <div className={`${ROBOTO} ml-[23px] mt-[1px] flex h-[28px] w-[28px] items-center justify-center border-2 border-[#9b9b9b] bg-[#3d3838] text-[17px] font-medium text-[#cfcfcf]`}>Fb</div>
      <div className={`${taskBtn} ${dark} ml-[16px] w-[93px] pl-[7px]`}><SnipIcon /><span className="ml-[1px]">Grace...</span></div>
      <div className={`${taskBtn} ${dark} ml-[4px] w-[93px] pl-[7px]`}><NotepadIcon /><span className="ml-[2px]">Untitle...</span></div>
      <div className={`${taskBtn} ${dark} ml-[4px] w-[93px] pl-[6px]`}><MouseIcon /><span className="ml-px">Mouse...</span></div>
      <div className={`${taskBtn} ${dark} ml-[4px] w-[93px] pl-[7px]`}><MarqueeIcon /><span className="ml-[3px]">Screen...</span></div>
      <div className="ml-[7px] flex h-[37px] w-[96px] items-center rounded-tl-[12px] border-l border-t border-[#5f7287] bg-[linear-gradient(#33465c,#14253a_50%,#1d3046)] pb-[5px] pl-[14px]">
        <div className="flex h-[19px] w-[43px] items-center justify-center border border-white bg-[#119033] text-[12px] tracking-[-0.1px] text-white">100%</div>
        <div className="h-[10px] w-[3px] border border-l-0 border-white" />
        <svg width="18" height="14" viewBox="0 0 18 14" className="ml-[9px]">
          <path d="M11 2H7a5 5 0 0 0 0 10h4M11 1.500h4v2.500h-3v2h3v2h-3v2h3v2.500h-4" fill="none" stroke="#e6e9ee" strokeWidth="1.200" />
        </svg>
      </div>
      <div className="ml-[3px] flex h-[37px] w-[146px] items-center bg-[linear-gradient(90deg,#66778d,#8395ab_30%,#7488a2_60%,#6c829f)] pb-[3px] text-white">
        <svg width="8" height="5" viewBox="0 0 8 5" className="ml-[7px]"><path d="M0 5L4 0l4 5z" fill="#fff" /></svg>
        <svg width="15" height="17" viewBox="0 0 15 17" className="ml-[13px]">
          <path d="M1 2h7v13H1z" fill="#5f7289" stroke="#fff" strokeWidth="1.500" />
          <path d="M3 0h3v2H3zM6 6h8v4c0 2-2 3-4 3s-4-1-4-3zM7.500 3h1.500v3H7.500zM11 3h1.500v3H11zM9 13h2v3H6v-1.500h3z" fill="#fff" stroke="#51637a" strokeWidth=".5" />
        </svg>
        <svg width="17" height="16" viewBox="0 0 17 16" className="ml-[8px]">
          <path d="M0 5h3l5-4v14l-5-4H0z" fill="#f3f5f8" stroke="#5d6b7d" strokeWidth=".6" />
          <circle cx="11.500" cy="10.500" r="4.500" fill="#fff" stroke="#dc2b22" strokeWidth="1.900" />
          <path d="M8.500 7.500l6 6" stroke="#dc2b22" strokeWidth="1.900" />
        </svg>
        <div className="ml-[13px] w-[56px] whitespace-nowrap text-center text-[12px] leading-[17px] tracking-[-0.4px]">
          <div>11:32 AM</div>
          <div>2/3/2016</div>
        </div>
      </div>
      <div className="h-[37px] flex-1 border-l border-[#3f546d] bg-[linear-gradient(110deg,#a3b1c2,#6c809a_60%,#8798ae)]" />
    </div>
  );
}

/* ---------- Floating layers ---------- */

function Recorder() {
  return (
    <div className={`${ARIAL} absolute left-0 top-[54px] flex h-[35px] w-[457px] items-center bg-[#202226] shadow-[2px_3px_4px_rgba(0,0,0,0.55)]`}>
      <div className="h-[33px] w-[13px] bg-[repeating-linear-gradient(90deg,#43464a_0px,#43464a_1px,#050505_1px,#050505_4px)]" />
      <div className="ml-[6px] flex h-[39px] w-[39px] shrink-0 items-center justify-center rounded-full bg-[#dc0507] text-[16px] tracking-[0.6px] text-[#f4f4f4] [-webkit-text-stroke:0.5px_#f4f4f4]">Rec</div>
      <svg width="16" height="18" viewBox="0 0 16 18" className="ml-[16px]"><path d="M0 0l15 9-15 9z" fill="#c6c9cc" /></svg>
      <div className="ml-[8px] flex h-[23px] w-[200px] items-center justify-end border border-[#4f7fb5] bg-[#76b0ea] pr-[4px] pt-[1px] text-[16px] tracking-[0.4px] text-[#1b2530] [-webkit-text-stroke:0.4px_#1b2530]">0:41.7</div>
      <div className="flex h-[23px] w-[50px] items-center justify-center gap-[12px] bg-[#303237]">
        <svg width="12" height="13" viewBox="0 0 12 13"><path d="M1.500 0v13" stroke="#aaadb1" strokeWidth="2" /><path d="M11 0v13L4 6.500z" fill="#aaadb1" /></svg>
        <svg width="12" height="13" viewBox="0 0 12 13"><path d="M10.500 0v13" stroke="#aaadb1" strokeWidth="2" /><path d="M1 0v13l7-6.500z" fill="#aaadb1" /></svg>
      </div>
      <div className="ml-[10px] h-[27px] w-px bg-[#44474b]" />
      <svg width="16" height="20" viewBox="0 0 16 20" className="-mt-[2px] ml-[10px]">
        <path d="M2.500 6v13h11V6M0 5.500h16M4.500 5l1.200-3.800h4.600L11.500 5" fill="none" stroke="#f2f2f2" strokeWidth="1.800" />
      </svg>
      <div className="ml-[10px] h-[27px] w-px bg-[#44474b]" />
      <span className="ml-[9px] text-[16px] tracking-[0.9px] text-[#cfd1d4] [-webkit-text-stroke:0.3px_#cfd1d4]">Done</span>
    </div>
  );
}

function RanorexWindow() {
  return (
    <div className={`${ARIAL} absolute left-[916px] top-[556px] flex h-[166px] w-[438px] flex-col border-2 border-[#646a70] bg-white text-black`}>
      <div className="flex h-[30px] shrink-0 items-center bg-[#e8e8e8] pl-[8px]">
        <svg width="18" height="19" viewBox="0 0 18 19" className="-mt-[2px]">
          <path d="M3 3l13-1 1 14-13 2z" fill="#f4faf3" stroke="#8d8d8d" />
          <path d="M16 2l1 14-13 2" fill="none" stroke="#555" strokeWidth="1.300" />
          <path d="M6 9l3 1M10 8l3-1M8 14l2-2 4 1M11 10l3 1" stroke="#54b957" strokeWidth="1.200" />
          <path d="M0 1l5 .5 4 3.500-4 1-4 2z" fill="#3c9c41" />
        </svg>
        <span className="ml-[7px] whitespace-nowrap text-[13px] font-bold tracking-[0.3px]">Ranorex Test Run</span>
      </div>
      <div className="flex h-[22px] items-center pl-[19px]">
        <svg width="10" height="10" viewBox="0 0 10 10"><path d="M0 0l10 5-10 5z" fill="#6b6b6b" /></svg>
        <span className="ml-[6px] text-[13px] font-bold">FIREFOX_QA</span>
      </div>
      <div className="mt-[4px] pl-[35px] text-[12px] leading-[16px] tracking-[-0.43px]">Searching item 'TreeItemXML' in 'ExactEquity'</div>
      <div className="mb-[7px] mt-auto flex items-center pl-[14px] text-[12px] leading-[12px] tracking-[-0.37px] text-[#707070]">
        <svg width="8" height="8" viewBox="0 0 8 8" className="mt-[1px]"><path d="M1 1l6 6M7 1l-6 6" stroke="#d62d2d" strokeWidth="2.500" /></svg>
        <div className="ml-[6px]">
          <div>Press 'Pause' to abort.</div>
          <div>Press 'Shift-Pause' to skip delays and timeouts.</div>
        </div>
      </div>
    </div>
  );
}

function SelectionHandles() {
  return (
    <>
      <svg width="20" height="20" viewBox="0 0 20 20" className="absolute left-[5px] top-[106px]"><path d="M1 1h18v5H6v12H1z" fill="#fff" stroke="#546a78" /></svg>
      <svg width="20" height="20" viewBox="0 0 20 20" className="absolute left-[1335px] top-[106px]"><path d="M1 1h18v18h-5V6H1z" fill="#fff" stroke="#546a78" /></svg>
      <svg width="20" height="20" viewBox="0 0 20 20" className="absolute left-[5px] top-[702px]"><path d="M.5.500h6V13.500h13v6H.5z" fill="#fff" stroke="#555" /></svg>
      <div className="absolute left-[664px] top-[106px] h-[7px] w-[32px] border border-[#546a78] bg-white" />
      <div className="absolute left-[664px] top-[715px] h-[7px] w-[32px] border border-[#555] bg-white" />
      <div className="absolute left-[5px] top-[398px] h-[32px] w-[7px] border border-[#555] bg-white" />
      <div className="absolute left-[1348px] top-[398px] h-[32px] w-[7px] border border-[#555] bg-white" />
      <svg width="42" height="42" viewBox="0 0 42 42" className="absolute left-[659px] top-[393px]">
        <rect width="42" height="42" rx="1.500" fill="#666" />
        <path d="M21 9v24M9 21h24" stroke="#fff" strokeWidth="2.200" />
        <path d="M21 5l4 7h-8zM21 37l4-7h-8zM5 21l7-4v8zM37 21l-7-4v8z" fill="#fff" />
      </svg>
    </>
  );
}

export default function App() {
  return (
    <div className="relative flex h-[768px] w-[1360px] flex-col overflow-hidden bg-white">
      <TitleBar />
      <NavBar />
      <Bookmarks />
      <Stripes />
      <AppHeader />
      <SubHeader />
      <div className="flex h-[440px] shrink-0 overflow-hidden">
        <Sidebar />
        <div className="flex min-w-0 flex-1 flex-col">
          <div className={`${ROBOTO} flex h-[66px] shrink-0 items-center border-b border-[#c9c9c9] bg-white pb-[2px] pl-[27px] text-[20px] tracking-[0.08px] text-[#e4553d]`}>Dashboard</div>
          <div className="flex min-h-0 flex-1">
            <Center />
            <RightPanel />
          </div>
        </div>
      </div>
      <Bottom />
      <Stripes />
      <Taskbar />
      <SelectionHandles />
      <Recorder />
      <RanorexWindow />
      <svg width="13" height="20" viewBox="0 0 13 20" className="absolute left-[379px] top-[83px]">
        <path d="M.7.800v15l3.500-3.200 2.400 5.700 2.600-1.100-2.400-5.500h4.700z" fill="#fff" stroke="#222" strokeWidth=".9" />
      </svg>
    </div>
  );
}
